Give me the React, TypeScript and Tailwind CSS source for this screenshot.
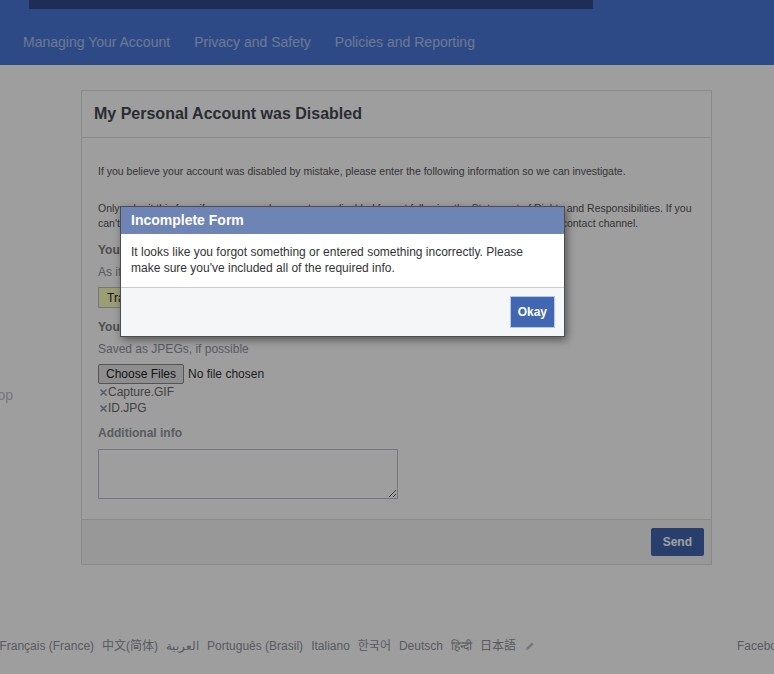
import React from "react";

const langs = [
  "English (US)",
  "Español",
  "Français (France)",
  "中文(简体)",
  "العربية",
  "Português (Brasil)",
  "Italiano",
  "한국어",
  "Deutsch",
  "हिन्दी",
  "日本語",
];

function XIcon() {
  return (
    <svg width="7" height="7" viewBox="0 0 7 7" className="ml-[2px] mr-[1px] shrink-0">
      <path d="M1 1L6 6M6 1L1 6" stroke="#8a96b3" strokeWidth="1.7" strokeLinecap="round" />
    </svg>
  );
}

function Pencil() {
  return (
    <svg width="11" height="11" viewBox="0 0 12 12" className="shrink-0">
      <path d="M2 10L3 7L8.5 1.5L10.5 3.5L5 9L2 10Z" fill="#bec3c9" />
    </svg>
  );
}

export default function App() {
  return (
    <div className="relative h-[674px] w-full overflow-hidden bg-white font-['Liberation_Sans',Arial,'Noto_Sans_CJK_SC',sans-serif] text-[12px] text-[#4b4f56]">
      {/* Header */}
      <header className="h-[65px] bg-[#4a77d8]">
        <div className="ml-[29px] h-[9px] w-[564px] bg-[#2f4a8b]" />
        <nav className="mt-[25px] flex gap-6 pl-[23px] text-[14px] leading-[16px] text-white/55">
          <span>Managing Your Account</span>
          <span>Privacy and Safety</span>
          <span>Policies and Reporting</span>
        </nav>
      </header>

      {/* Main */}
      <div className="flex pt-[25px]">
        <aside className="w-[81px] shrink-0 overflow-hidden">
          <div className="flex justify-end pr-[68px] pt-[297px] text-[14px] leading-[16px] text-[#bec3c9]">
            <span className="shrink-0 whitespace-nowrap">Desktop</span>
          </div>
        </aside>

        <section className="w-[631px] shrink-0 border border-[#dddfe2] bg-white">
          <div className="flex h-[47px] items-center border-b border-[#dddfe2] pl-[12px]">
            <h1 className="text-[16px] font-bold text-[#444950]">My Personal Account was Disabled</h1>
          </div>

          <div className="px-4 pb-[20px] pt-[26px] leading-[15px] text-[#555]">
            <p className="text-[10.5px]">
              If you believe your account was disabled by mistake, please enter the following information so we can
              investigate.
            </p>
            <p className="mt-[22px] whitespace-nowrap text-[10.5px]">
              Only submit this form if your personal account was disabled for not following the Statement of Rights
              and Responsibilities. If you
              <br />
              can't log in to your account for any other reason, please visit the Help Center to find the appropriate
              contact channel.
            </p>

            <div className="mt-[12px] font-bold text-[#7d7d7d]">Your full name</div>
            <div className="mt-[7px] text-[#90949c]">As it appears on your account</div>
            <input
              readOnly
              value="Tran Van Nam"
              className="mt-[7px] block h-[21px] w-[300px] border border-[#bdc1c9] bg-[#faffbd] px-[8px] text-[12px] text-[#1d2129] outline-none"
            />

            <div className="mt-[12px] font-bold text-[#7d7d7d]">Your ID</div>
            <div className="mt-[7px] text-[#90949c]">Saved as JPEGs, if possible</div>
            <div className="mt-[7px] flex items-center text-[12px]">
              <button className="h-[20px] rounded-[2px] border border-[#888] bg-[#e6e6e6] px-[7px] leading-[16px] text-[#222]">
                Choose Files
              </button>
              <span className="ml-[4px] text-[#333]">No file chosen</span>
            </div>
            <div className="flex items-center leading-[16px] text-[#6a6a6a]">
              <XIcon />
              Capture.GIF
            </div>
            <div className="flex items-center leading-[16px] text-[#6a6a6a]">
              <XIcon />
              ID.JPG
            </div>

            <div className="mt-[10px] font-bold text-[#90949c]">Additional info</div>
            <textarea className="mt-[8px] block h-[50px] w-[300px] border border-[#bdc1c9] bg-white" />
          </div>

          <div className="flex justify-end border-t border-[#dddfe2] bg-[#f5f6f7] py-[8px] pr-[7px]">
            <button className="h-[28px] rounded-[2px] bg-[#4267b2] px-[12px] text-[12px] font-bold text-white">
              Send
            </button>
          </div>
        </section>
      </div>

      {/* Footer */}
      <footer className="mt-[73px] flex overflow-hidden leading-[16px] text-[#90949c]">
        <div className="flex w-[540px] shrink-0 justify-end overflow-hidden pr-[5px]">
          <div className="flex shrink-0 items-center gap-[8px] whitespace-nowrap">
            {langs.map((l) => (
              <span key={l}>{l}</span>
            ))}
            <Pencil />
          </div>
        </div>
        <span className="ml-[197px] shrink-0 whitespace-nowrap">Facebook © 2018</span>
      </footer>

      {/* Overlay */}
      <div className="absolute inset-0 bg-black/[0.38]" />

      {/* Dialog */}
      <div className="absolute left-[120px] top-[206px] w-[445px] border border-[#4d4d4d] shadow-[2px_3px_8px_rgba(0,0,0,0.45)]">
        <div className="flex h-[27px] items-center bg-[#6d84b4] pl-[10px] text-[14px] font-bold text-white">
          Incomplete Form
        </div>
        <div className="bg-white px-[10px] pb-[11px] pt-[10px] leading-[16px] text-[#333]">
          It looks like you forgot something or entered something incorrectly. Please make sure you've included all of
          the required info.
        </div>
        <div className="flex justify-end border-t border-[#ccc] bg-[#f5f6f7] py-[9px] pr-[10px]">
          <button className="h-[30px] border border-[#4267b2] bg-[#4267b2] px-[6px] text-[12px] font-bold text-white ring-1 ring-[#b7c7ea]">
            Okay
          </button>
        </div>
      </div>
    </div>
  );
}
